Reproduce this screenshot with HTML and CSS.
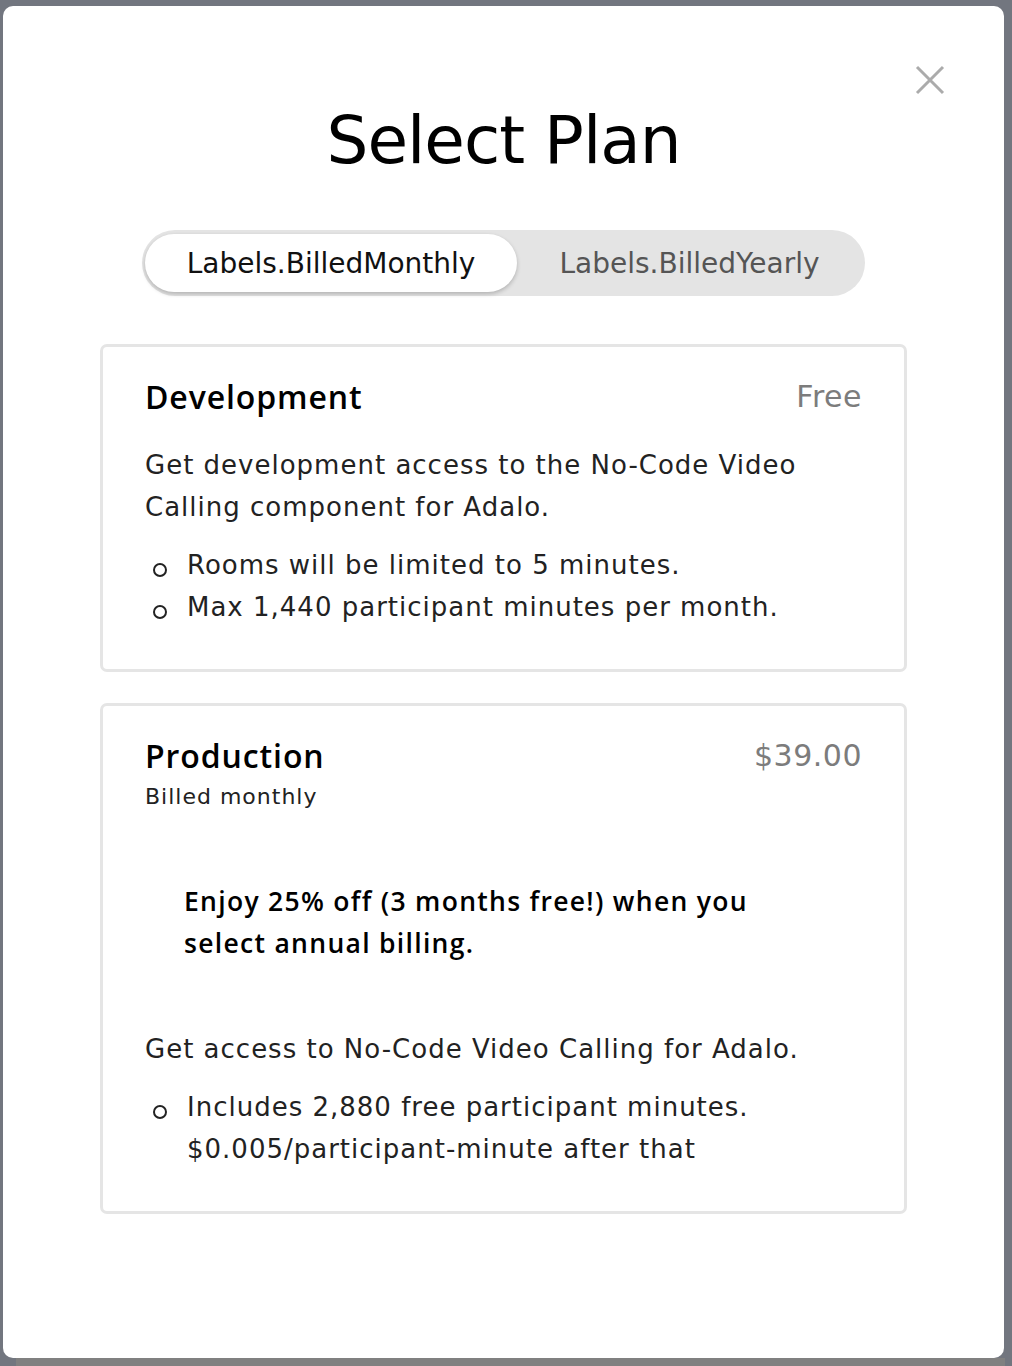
FILE: index.html
```html
<!DOCTYPE html>
<html lang="en">
<head>
<meta charset="utf-8">
<title>Select Plan</title>
<link rel="stylesheet" href="styles.css">
</head>
<body>
<div class="modal">
  <button class="close" aria-label="Close">
    <svg width="30" height="30" viewBox="0 0 30 30"><path d="M2 2 L28 28 M28 2 L2 28" stroke="#ababab" stroke-width="3" fill="none"/></svg>
  </button>
  <h1 class="title">Select Plan</h1>
  <div class="toggle">
    <div class="toggle-opt active">Labels.BilledMonthly</div>
    <div class="toggle-opt">Labels.BilledYearly</div>
  </div>
  <div class="card">
    <div class="card-head">
      <div class="plan-name">Development</div>
      <div class="plan-price">Free</div>
    </div>
    <p class="desc">Get development access to the No-Code Video Calling component for Adalo.</p>
    <ul class="features">
      <li>Rooms will be limited to 5 minutes.</li>
      <li>Max 1,440 participant minutes per month.</li>
    </ul>
  </div>
  <div class="card card-prod">
    <div class="card-head">
      <div>
        <div class="plan-name">Production</div>
        <div class="plan-sub">Billed monthly</div>
      </div>
      <div class="plan-price">$39.00</div>
    </div>
    <p class="promo">Enjoy 25% off (3 months free!) when you select annual billing.</p>
    <p class="desc">Get access to No-Code Video Calling for Adalo.</p>
    <ul class="features">
      <li>Includes 2,880 free participant minutes. $0.005/participant-minute after that</li>
    </ul>
  </div>
</div>
<div class="underlay"></div>
</body>
</html>
```
FILE: styles.css
```css
* { box-sizing: border-box; }
html, body { margin: 0; padding: 0; }
body {
  background: #72767f;
  font-family: "DejaVu Sans", "Liberation Sans", sans-serif;
  color: #1a1a1a;
  height: 1366px;
  overflow: hidden;
}
.modal {
  position: relative;
  margin: 6px 8px 0 3px;
  height: 1352px;
  background: #fff;
  border-radius: 10px;
  padding: 93px 97px 0 97px;
}
.close {
  position: absolute;
  top: 59px;
  right: 59px;
  width: 30px;
  height: 30px;
  padding: 0;
  border: 0;
  background: none;
}
.close svg { display: block; }
.title {
  margin: 0;
  text-align: center;
  font-weight: 400;
  font-size: 66px;
  line-height: 84px;
  letter-spacing: -1px;
  color: #000;
}
.toggle {
  display: flex;
  width: 723px;
  height: 66px;
  margin: 47px auto 48px;
  padding: 4px 3px;
  background: #e4e4e4;
  border-radius: 33px;
  font-size: 28px;
}
.toggle-opt {
  display: flex;
  align-items: center;
  justify-content: center;
  flex: 1;
  color: #555;
}
.toggle-opt.active {
  flex: 0 0 372px;
  background: #fff;
  color: #111;
  border-radius: 29px;
  box-shadow: 0 2px 4px rgba(0,0,0,0.22);
}
.card {
  border: 3px solid #e5e5e5;
  border-radius: 7px;
  padding: 28px 42px 41px 42px;
  margin-bottom: 31px;
}
.card-head {
  display: flex;
  justify-content: space-between;
  align-items: flex-start;
}
.plan-name {
  font-family: "Open Sans", "DejaVu Sans", sans-serif;
  font-size: 32px;
  line-height: 44px;
  font-weight: 600;
  letter-spacing: 0.9px;
  color: #000;
}
.plan-price {
  font-size: 30px;
  line-height: 44px;
  letter-spacing: 0.5px;
  color: #7c7c7c;
  font-weight: 400;
}
.plan-sub {
  font-size: 22px;
  line-height: 32px;
  letter-spacing: 1px;
  color: #222;
  margin-top: 3px;
}
.desc {
  margin: 25px 0 0;
  font-size: 26px;
  line-height: 42px;
  letter-spacing: 1px;
  color: #222;
}
.promo {
  margin: 67px 0 0 39px;
  font-family: "Open Sans", "DejaVu Sans", sans-serif;
  font-size: 26.5px;
  line-height: 42px;
  font-weight: 600;
  letter-spacing: 1.3px;
  color: #000;
  width: 580px;
}
.card-prod .desc { margin-top: 64px; }
.features {
  margin: 16px 0 0;
  padding-left: 42px;
  list-style: none;
  font-size: 26px;
  line-height: 42px;
  letter-spacing: 1px;
  color: #222;
}
.features li { position: relative; }
.features li::before {
  content: "";
  position: absolute;
  left: -34px;
  top: 19px;
  width: 10px;
  height: 10px;
  border: 2px solid #222;
  border-radius: 50%;
}
.underlay {
  height: 8px;
  margin: 0 7px 0 16px;
  background: #808080;
}
```
